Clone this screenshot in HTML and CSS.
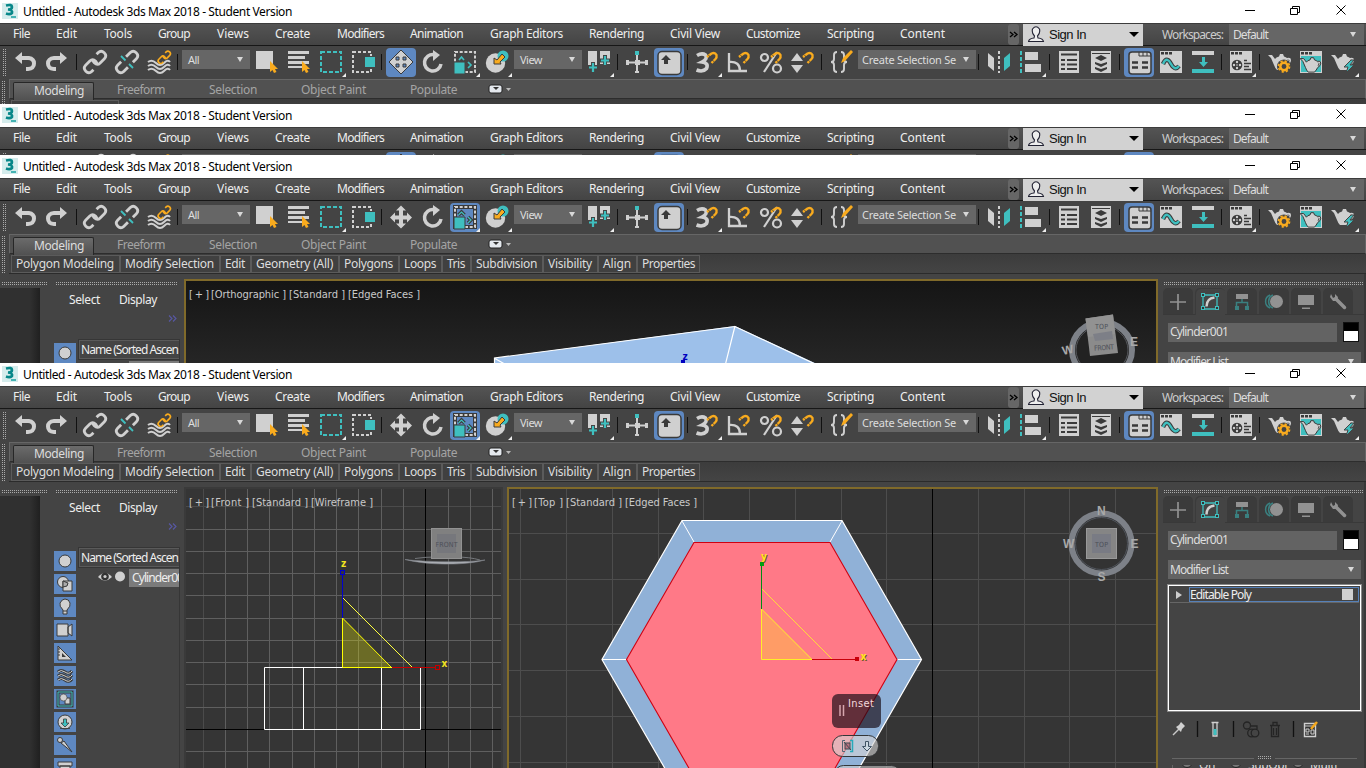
FILE: index.html
```html
<!DOCTYPE html>
<html lang="en">
<head>
<meta charset="utf-8">
<title>Untitled - Autodesk 3ds Max 2018 - Student Version</title>
<link rel="stylesheet" href="styles.css">
</head>
<body>
<section class="window window-a" data-active="move" data-rows="tabs"></section>
<section class="window window-b" data-active="move" data-rows="menu"></section>

<section class="window window-c" data-active="scale">
  <div class="workspace">
    <div class="explorer-slot"></div>
    <div class="views">
      <svg class="view" width="974" height="84" viewBox="184 279 974 84">
        <defs><linearGradient id="dark" x2="0" y2="1"><stop stop-color="#151515"/><stop offset="1" stop-color="#272727"/></linearGradient></defs>
        <rect x="184" y="279" width="974" height="100" fill="#806a2a"/>
        <rect x="186" y="281" width="970" height="90" fill="url(#dark)"/>
        <path d="M494 370V358L735 326L830 370Z" fill="#9dc0ea"/>
        <path d="M494.500 370V358L735 326.500L830 371M494 358L510 367M735 326L724 370" fill="none" stroke="#fff" stroke-width="1.200"/>
        <rect x="681" y="360" width="4" height="4" fill="#0000c0"/>
        <text class="axis" x="682.500" y="360" fill="#0000c0">z</text>
        <text class="vlabel" x="189" y="298"><tspan textLength="20">[+]</tspan><tspan x="211" textLength="75">[Orthographic ]</tspan><tspan x="289" textLength="56">[Standard ]</tspan><tspan x="348" textLength="72">[Edged Faces ]</tspan></text>
        <ellipse cx="1102" cy="350" rx="30" ry="28" fill="none" stroke="#7d8188" stroke-width="6"/>
        <ellipse cx="1102" cy="350" rx="26" ry="24" fill="#222" stroke="#55575c" stroke-width="1"/>
        <path d="M1085.500 318.500L1113 314.500L1118 353L1090 356Z" fill="#8b8b8b"/>
        <path d="M1085.500 318.500L1113 314.500L1115 334L1088 337Z" fill="#929292"/>
        <path d="M1093 334L1112 331L1113 339L1095 341Z" fill="#7d7f87"/>
        <text class="cube" x="1095" y="329" textLength="13">TOP</text>
        <text class="cube" x="1094" y="350" textLength="20" transform="rotate(-4 1104 347)">FRONT</text>
        <text class="compass" x="1062" y="354" transform="rotate(-12 1067 350)">W</text>
        <text class="compass" x="1130" y="346">E</text>
      </svg>
    </div>
    <div class="command-slot"></div>
  </div>
</section>

<section class="window window-d" data-active="scale">
  <div class="workspace">
    <div class="explorer-slot"></div>
    <div class="views">
      <svg class="view" width="323" height="281" viewBox="184 487 323 281">
        <rect x="184" y="487" width="323" height="281" fill="#444"/>
        <rect x="184" y="487" width="319" height="281" fill="#3a3a3a"/>
        <rect x="186" y="489" width="315" height="279" fill="#353535"/>
        <path d="M203.500 489V768M186 506.500H501" stroke="#4b4b4b"/>
        <path d="M225.500 489V768M247.500 489V768M269.500 489V768M292.500 489V768M314.500 489V768M336.500 489V768M358.500 489V768M381.500 489V768M403.500 489V768M448.500 489V768M470.500 489V768M492.500 489V768M186 529.500H501M186 551.500H501M186 573.500H501M186 595.500H501M186 618.500H501M186 640.500H501M186 662.500H501M186 684.500H501M186 707.500H501M186 751.500H501" stroke="#5f5f5f"/>
        <path d="M425.500 489V768M186 729.500H501" stroke="#000"/>
        <path d="M264.500 667.500H420.500V729.500H264.500ZM303.500 667V729M381.500 667V729" fill="none" stroke="#fff"/>
        <path d="M342.500 618L391.500 667.500H342.500Z" fill="#ffff00" fill-opacity=".27" stroke="#ffff00"/>
        <path d="M343 598L412 667" stroke="#ffff40"/>
        <path d="M342.500 574V618" stroke="#0000d0"/><rect x="340.500" y="570.500" width="4" height="4" fill="#334" stroke="#0000d0"/>
        <path d="M392 667.500H436" stroke="#c80000"/><rect x="435.500" y="665.500" width="4" height="4" fill="#333" stroke="#c80000"/>
        <text class="axis" x="341" y="567" fill="#f2e520">z</text>
        <text class="axis" x="441.500" y="667" fill="#f2e520">x</text>
        <path d="M405 559.500C425 565 465 566 485 560C465 563 425 562 405 559.500Z" fill="#adb0b5" stroke="#81858b" stroke-width=".6"/>
        <path d="M415 558.500Q425 557 435 557M455 557Q470 557 480 560" fill="none" stroke="#74777b"/>
        <rect x="431.500" y="528.500" width="30" height="30" fill="#808080" stroke="#929292"/>
        <rect x="437" y="534" width="19" height="19" fill="#76777c"/>
        <text class="cube" x="435.500" y="546.500" textLength="22">FRONT</text>
        <text class="vlabel" x="189" y="506"><tspan textLength="20">[+]</tspan><tspan x="211" textLength="38">[Front ]</tspan><tspan x="252" textLength="56">[Standard ]</tspan><tspan x="311" textLength="62">[Wireframe ]</tspan></text>
      </svg>
      <svg class="view" width="651" height="281" viewBox="507 487 651 281">
        <rect x="507" y="487" width="651" height="290" fill="#806a2a"/>
        <rect x="509" y="489" width="647" height="290" fill="#353535"/>
        <path d="M520.500 489V768M566.500 489V768M612.500 489V768M658.500 489V768M703.500 489V768M749.500 489V768M795.500 489V768M841.500 489V768M886.500 489V768M978.500 489V768M1024.500 489V768M1069.500 489V768M1115.500 489V768M509 533.500H1156M509 579.500H1156M509 624.500H1156M509 670.500H1156M509 716.500H1156M509 762.500H1156" stroke="#4d4d4d"/>
        <path d="M932.500 489V768" stroke="#000"/>
        <path d="M682 520.500H842L921.500 659.500L842 798H682L602 659.500Z" fill="#90b1d7" stroke="#fff" stroke-width="1.200"/>
        <path d="M682 521L694 542M842 521L830 542M602 659.500H627M897 659.500H922" stroke="#fff"/>
        <path d="M694 542.500H830L897 659.500L830 777H694L626.500 659.500Z" fill="#ff7987" stroke="#d00010" stroke-width="1.100"/>
        <path d="M761.500 609L812 659.500H761.500Z" fill="#ff9c66" stroke="#ffef28"/>
        <path d="M762 589L832 659" stroke="#ffe630" stroke-width=".9"/>
        <path d="M761.500 564V609" stroke="#008c14"/><rect x="760" y="562" width="4" height="4" fill="#00a010"/>
        <path d="M812 659.500H857" stroke="#c8000a"/><rect x="855" y="657" width="4" height="4" fill="#c8000a"/>
        <text class="axis shadow" x="761" y="560" fill="#ffe820">y</text>
        <text class="axis shadow" x="860.500" y="660" fill="#ffe820">x</text>
        <rect x="832" y="694" width="49" height="34" rx="6" fill="#180c16" fill-opacity=".68"/>
        <path d="M840 705V716M843.500 705V716" stroke="#d6a5ad" stroke-width="1.500"/>
        <text class="inset" x="848" y="707" textLength="26">Inset</text>
        <rect x="832.500" y="735.500" width="46" height="21" rx="10" fill="#d5d5d5" fill-opacity=".62" stroke="#343638"/>
        <path d="M845 740.500H842.500V751.500H845" fill="none" stroke="#526472"/><path d="M850 740.500H852.500V751.500H850" fill="none" stroke="#27a9ba" stroke-width="1.500"/>
        <rect x="845" y="743" width="5" height="6" fill="#b9727f" stroke="#3c4850"/><path d="M844 742L851 750" stroke="#3c4850"/>
        <path d="M865.500 741.500H868.500V746.500H871.500L867 751L862.500 746.500H865.500Z" fill="#ccd9e3" stroke="#405466"/>
        <rect x="834.500" y="765.500" width="66" height="20" rx="9" fill="#c9c9c9" fill-opacity=".6" stroke="#343638"/>
        <circle cx="1101.500" cy="543.500" r="30" fill="#333" stroke="#7d8188" stroke-width="6"/>
        <circle cx="1101.500" cy="543.500" r="26" fill="none" stroke="#50555d"/>
        <rect x="1086.500" y="528.500" width="30" height="30" fill="#858585" stroke="#999"/>
        <rect x="1092" y="534" width="19" height="19" fill="#797b84"/>
        <text class="cube" x="1095" y="546.500" textLength="13">TOP</text>
        <text class="compass" x="1097" y="515">N</text><text class="compass" x="1097.500" y="581">S</text>
        <text class="compass" x="1063" y="548">W</text><text class="compass" x="1130.500" y="548">E</text>
        <text class="vlabel" x="512" y="506"><tspan textLength="20">[+]</tspan><tspan x="534" textLength="29">[Top ]</tspan><tspan x="566" textLength="56">[Standard ]</tspan><tspan x="625" textLength="72">[Edged Faces ]</tspan></text>
      </svg>
    </div>
    <div class="command-slot"></div>
  </div>
</section>

<template id="explorer">
  <aside class="explorer">
    <div class="dock-strip"><i class="dots"></i><div class="dock-dark"></div></div>
    <div class="scene">
      <i class="dots"></i>
      <div class="scene-menu"><span data-w="31">Select</span><span data-w="38">Display</span></div>
      <div class="chevrons"><svg width="9" height="7"><path d="M1 .5L4 3.500L1 6.500M5 .5L8 3.500L5 6.500" fill="none" stroke="#5858a4" stroke-width="1.100"/></svg></div>
      <div class="scene-main">
        <div class="filters"></div>
        <div class="tree">
          <div class="tree-head"><span data-w="97">Name (Sorted Ascen</span></div>
          <div class="tree-row">
            <svg width="31" height="18"><path d="M0 8Q7 0 14 8Q7 15 0 8Z" fill="#cfcfcf"/><circle cx="7" cy="7.500" r="3.800" fill="#333"/><circle cx="7" cy="7.500" r="1.600" fill="#ccc"/><circle cx="22" cy="7.500" r="5" fill="#d0d0d0"/></svg>
            <div class="tree-name"><span data-w="57">Cylinder001</span></div>
          </div>
        </div>
      </div>
    </div>
  </aside>
</template>

<template id="command">
  <aside class="command">
    <i class="dots"></i>
    <div class="cmd-tabs">
      <svg viewBox="0 0 30 26"><path d="M15 6V22M7 14H23" stroke="#929292" stroke-width="1.700"/></svg>
      <svg class="on" viewBox="0 0 30 26"><g transform="translate(.5)"><path d="M8 6.500H21M8 20.500H21M7.500 8V20M21.500 8V20" stroke="#3fbfbf" stroke-width="1.300"/><g fill="#333" stroke="#3fbfbf"><rect x="6" y="5" width="3" height="3"/><rect x="20" y="5" width="3" height="3"/><rect x="6" y="18" width="3" height="3"/><rect x="20" y="18" width="3" height="3"/></g><path d="M11 18Q11 10 19 9" fill="none" stroke="#d0d0d0" stroke-width="2.500"/></g></svg>
      <svg viewBox="0 0 30 26"><rect x="9" y="6" width="12" height="5" fill="#929292"/><path d="M15 11V15M9.500 19V14.500H20.500V19" fill="none" stroke="#3a8080" stroke-width="1.500"/><path d="M8 18H12V22H8ZM18 18H22V22H18Z" fill="#3a8080"/></svg>
      <svg viewBox="0 0 30 26"><path d="M11 7A7 7 0 0 0 11 20M14 7A7 7 0 0 0 14 20" fill="none" stroke="#3a8080" stroke-width="1.500"/><circle cx="17.500" cy="13.500" r="6.500" fill="#929292"/></svg>
      <svg viewBox="0 0 30 26"><path d="M7 7H23V17H7ZM11 19.500H19V21H11Z" fill="#929292"/></svg>
      <svg viewBox="0 0 30 26"><path d="M13 11L21.500 19.500" stroke="#929292" stroke-width="3.500" stroke-linecap="round"/><path d="M8 6L7 9L10 13H14L15 9L12 6L12 9L10 10Z" fill="#929292"/></svg>
    </div>
    <div class="name-row"><div class="field name-field"><span data-w="58">Cylinder001</span></div><i class="swatch"></i></div>
    <div class="field mod-list"><span data-w="58">Modifier List</span><i class="tri"></i></div>
    <div class="stack"><div class="stack-row"><i class="expand"></i><div class="stack-item"><span data-w="61">Editable Poly</span><i class="toggle"></i></div></div></div>
    <svg class="stack-tools" width="195" height="24" viewBox="1167 717 195 24">
      <path d="M1173 735L1179 729" stroke="#c8c8c8" stroke-width="1.500"/><path d="M1176 727L1181 732L1182 729L1185 726L1181 722L1179 725Z" fill="#d0d0d0"/>
      <path d="M1197.500 721V737M1233.500 721V737M1293.500 721V737" stroke="#111" stroke-width="1.300"/>
      <path d="M1211.500 722.500H1218.500M1213 723V736H1217V723" fill="none" stroke="#d0d0d0" stroke-width="1.300"/><rect x="1213.500" y="729" width="3" height="6" fill="#3fbfbf"/>
      <g fill="#444" stroke="#242424" stroke-width="1.300"><circle cx="1247" cy="725.500" r="3.500"/><circle cx="1251.500" cy="733" r="3.800"/><circle cx="1255" cy="733" r="3.800"/><path d="M1251 726H1257V729" fill="none"/></g>
      <path d="M1270 725.500H1280M1273 725V722.500H1277V725M1271.500 726V736.500H1278.500V726M1273.500 728V735M1276.500 728V735" fill="none" stroke="#242424" stroke-width="1.300"/>
      <path d="M1304.500 723.500H1315.500V736.500H1304.500Z" fill="#333" stroke="#d0d0d0" stroke-width="1.400"/><path d="M1305 726H1315M1306 729H1309V732H1306ZM1311 730H1314V734H1311ZM1306 734H1309" fill="none" stroke="#d0d0d0"/><path d="M1311 729L1317 722" stroke="#f5a81c" stroke-width="2.500"/>
    </svg>
    <div class="divider"><i></i><b class="dots"></b><i></i></div>
    <div class="options"><div><i></i><span>On</span></div><div><i></i><span>SubObj</span></div><div><i></i><span>Multi</span></div></div>
  </aside>
</template>
<script src="script.js"></script>
</body>
</html>
```

FILE: styles.css
```css
* { box-sizing: border-box; }
body { margin: 0; width: 1366px; height: 768px; overflow: hidden; background: #444; font-family: "Noto Sans", "Open Sans", sans-serif; font-size: 12px; }
i, b { display: block; font-style: normal; }
svg { display: block; flex: none; }
span { white-space: nowrap; }
.window { overflow: hidden; background: #444; width: 1366px; }
.window-a { height: 104px; }
.window-b { height: 51px; }
.window-c { height: 208px; }
.window-d { height: 405px; }

.titlebar { height: 23px; background: #fff; color: #000; display: flex; align-items: center; padding-left: 2px; }
.titlebar span { margin-left: 5px; line-height: 22px; }
.titlebar .logo { margin-top: -1px; }
.titlebar .controls { margin: -1px 0 0 auto; }

.menubar { height: 23px; display: flex; background: linear-gradient(#545454, #444); border-top: 1px solid #3c3c3c; border-bottom: 1px solid #171717; color: #eee; line-height: 20px; }
.menu { display: flex; padding-left: 13px; width: 1008px; }
.menu div { flex: none; }
.more { width: 11px; height: 21px; border-radius: 3px; background: #666; padding: 7px 0 0 1px; }
.sign { width: 120px; height: 22px; margin-left: 4px; background: #d2d2d2; color: #111; display: flex; align-items: center; padding: 0 4px 2px 5px; font: 13px "Liberation Sans", sans-serif; }
.sign span { margin-left: 4px; }
.sign .drop { margin: 0 0 0 auto; border: 5px solid transparent; border-top-color: #000; border-bottom: 0; }
.work { margin-left: 19px; width: 67px; color: #ccc; line-height: 22px; }
.work-select { width: 135px; height: 21px; background: #666; color: #ddd; padding: 0 8px 0 4px; display: flex; align-items: center; justify-content: space-between; }
.tri { border: 3px solid transparent; border-top: 5px solid #d8d8d8; border-bottom: 0; }

.toolbar { height: 33px; display: flex; background: #444; }
.grip { width: 10px; padding: 3px 0 0 3px; }
.grip::before { content: ""; display: block; width: 3px; height: 27px; background: radial-gradient(circle at .5px .5px, #aaa 0 .7px, transparent .8px) 0 0 / 2px 2px; }
.tool { width: 32px; height: 32px; flex: none; display: grid; place-items: center; }
.tool svg { grid-area: 1 / 1; overflow: visible; }
.tool.active::before { content: ""; grid-area: 1 / 1; width: 30px; height: 29px; border-radius: 4px; background: #5e88c1; }
.sep { flex: none; padding: 8px 0 0 2px; }
.sep::before { content: ""; display: block; width: 1px; height: 16px; background: #111; }
.combo { flex: none; margin-top: 4px; height: 19px; background: #666; color: #ddd; display: flex; align-items: center; justify-content: space-between; padding: 0 7px 1px 6px; font-size: 11px; }
.combo.wide { padding-left: 4px; }

.ribbon { display: flex; height: 40px; }
.ribbon .grip { width: 9px; padding: 2px 0 0 2px; }
.ribbon .grip::before { height: 37px; }
.ribbon-main { flex: 1; }
.tabs { height: 20px; display: flex; background: #515151; border-top: 1px solid #666; border-left: 1px solid #666; border-right: 1px solid #666; border-bottom: 1px solid #2d2d2d; color: #a4a4a4; line-height: 20px; }
.tabs > div { flex: none; }
.tabs .current { margin: 2px 0 0 3px; padding-left: 20px; background: linear-gradient(#6b6b6b, #515151); border: 1px solid #272727; border-bottom: 0; border-radius: 2px 2px 0 0; width: 81px; color: #ddd; line-height: 15px; height: 18px; }
.tabs svg { margin: 4px 0 0 0; }
.panels { height: 20px; background: linear-gradient(#3c3c3c, #444); border-bottom: 1px solid #2b2b2b; display: flex; padding-left: 2px; }
.panels > div { height: 18px; margin-top: 1px; border: 1px solid #5b5b5b; background: #404040; color: #ddd; line-height: 15px; padding-left: 4px; flex: none; }

.workspace { display: flex; }
.explorer { width: 184px; height: 286px; display: flex; overflow: hidden; }
.dots { height: 4px; background: radial-gradient(circle at .5px .5px, #aaa 0 .7px, transparent .8px) 0 0 / 2px 2px; }
.dock-strip { width: 40px; padding-top: 8px; }
.dock-strip .dots { width: 45px; margin-left: 2px; height: 3px; }
.dock-dark { height: 275px; margin-top: 3px; background: linear-gradient(90deg, #303030 75%, #202020); }
.scene { width: 144px; padding: 8px 4px 0 14px; }
.scene > .dots { width: 122px; margin-left: 2px; height: 3px; }
.scene-menu { display: flex; gap: 19px; color: #eee; padding: 7px 0 0 15px; height: 27px; line-height: 16px; }
.chevrons { display: flex; justify-content: flex-end; padding: 3px 3px 0 0; height: 27px; }
.scene-main { display: flex; gap: 2px; }
.filters { display: grid; gap: 3px; padding-top: 4px; width: 22px; flex: none; }
.filters svg { width: 22px; height: 20px; background: #5e88c1; }
.tree { width: 102px; overflow: hidden; border-right: 1px solid #363636; }
.tree-head { height: 21px; border: 1px solid #363636; border-right: 0; box-shadow: inset 0 1px #5a5a5a, inset 0 -1px #5a5a5a, inset 1px 0 #5a5a5a; padding-left: 2px; color: #eee; line-height: 19px; overflow: hidden; white-space: nowrap; }
.tree-row { display: flex; height: 20px; padding: 1px 0 0 20px; }
.tree-name { flex: none; width: 60px; height: 18px; background: #7b7b7b; color: #eee; padding-left: 3px; line-height: 17px; }

.views { width: 974px; display: flex; padding-top: 5px; flex: none; }
.view { overflow: hidden; }
.vlabel { font: 11px "DejaVu Sans Condensed", "DejaVu Sans", sans-serif; fill: #c9c9c9; white-space: pre; }
.axis { font: bold 10px "DejaVu Sans Condensed", "DejaVu Sans", sans-serif; }
.shadow { text-shadow: 1px 1px #6a5a20; }
.cube { font: 7px "DejaVu Sans Condensed", "DejaVu Sans", sans-serif; fill: #4d5058; }
.compass { font: bold 12px "Liberation Sans", sans-serif; fill: #a9a9a9; }
.inset { font: 11px "DejaVu Sans Condensed", "DejaVu Sans", sans-serif; fill: #f3d8dc; }

.command { width: 208px; height: 286px; padding: 8px 0 0 5px; overflow: hidden; border-right: 2px solid #383838; }
.command > .dots { width: 199px; margin-left: 1px; height: 3px; }
.cmd-tabs { display: flex; gap: 2px; height: 30px; padding-top: 3px; border-bottom: 1px solid #393939; }
.cmd-tabs svg { width: 30px; height: 26px; border-radius: 5px 5px 0 0; background: #3b3b3b; }
.cmd-tabs .on { height: 27px; background: #444; box-shadow: inset 1px 1px #3b3b3b; }
.field { background: #636363; color: #ddd; height: 19px; line-height: 18px; padding-left: 2px; }
.name-row { display: flex; gap: 6px; padding: 8px 0 0 5px; height: 37px; }
.name-field { width: 169px; }
.swatch { width: 16px; height: 20px; margin-top: -1px; border: 1px solid #111; background: linear-gradient(#000 45%, #fff 45%); }
.mod-list { margin-left: 5px; width: 193px; display: flex; justify-content: space-between; align-items: center; padding-right: 7px; }
.stack { width: 195px; height: 128px; margin: 5px 0 0 4px; border: 1px solid #888; outline: 1px solid #fff; outline-offset: -2px; padding: 2px; }
.stack-row { height: 16px; border-bottom: 1px solid #666; display: flex; }
.expand { border: 4px solid transparent; border-left: 6px solid #ccc; border-right: 0; width: 6px; height: 8px; margin: 4px 7px 0 6px; }
.stack-item { flex: 1; height: 15px; border: 1px solid #5580b8; color: #eee; display: flex; justify-content: space-between; align-items: center; padding: 0 5px 0 0; line-height: 13px; }
.toggle { width: 11px; height: 11px; background: #d0d0d0; }
.stack-tools { margin: 5px 0 0 4px; }
.divider { display: flex; gap: 4px; height: 24px; align-items: center; padding: 10px 0 0 9px; }
.divider i { width: 82px; height: 1px; background: #666; }
.divider .dots { width: 13px; }
.options { display: flex; margin: 0 0 0 9px; height: 6px; overflow: hidden; border-left: 1px solid #666; color: #ddd; font-size: 12px; }
.options div { display: flex; width: 62px; padding-left: 8px; }
.options div:first-child { width: 49px; }
.options i { width: 12px; height: 12px; border-radius: 50%; margin: -9px 6px 0 0; background: #777; border: 1px solid #222; flex: none; }
.options span { line-height: 12px; margin-top: -6px; height: 12px; letter-spacing: -.4px; }
```

FILE: script.js
```js
const G = '#d0d0d0', T = '#3fbfbf', Y = '#f9ab1e', D = '#3a3a3a';
const fly = `<path d="M31 27V31H27Z" fill="#eee"/>`;
const magnet = `<path d="M16 11L20.500 7.500Q24 6 25.500 9Q26 11.500 24.500 13L20.500 17" fill="none" stroke="${Y}" stroke-width="2.400"/><path d="M17.500 9L19 11M21 14L23.500 16" stroke="#444" stroke-width=".8"/>`;
const chain = `<g transform="rotate(-45 16 16)" fill="none" stroke-width="2.800"><path d="M9.500 20.300H7Q3 20.300 3 16Q3 11.700 7 11.700H13Q17 11.700 17 16Q17 18 15.500 19.500"/><path d="M22.500 11.700H25Q29 11.700 29 16Q29 20.300 25 20.300H19Q15 20.300 15 16Q15 14 16.500 12.500"/></g>`;
const broken = `<g transform="rotate(-45 16 16)" fill="none" stroke-width="2.800"><path d="M13 20.300H7Q3 20.300 3 16Q3 11.700 7 11.700H12"/><path d="M19 11.700H25Q29 11.700 29 16Q29 20.300 25 20.300H20"/></g>`;
const cursor = `<path d="M19 15V26L21.500 24L23 27L25.500 26L24 23H27Z" fill="${Y}"/>`;
const pot = `<path d="M4 9H8L11 13Q12 11 15 10.500L16 8H19L20 10.500Q22 11 23 12Q27 11 27 14Q27 17 23.500 19Q22 22 20 24H13Q11 22 10 19L7 12Z" fill="${G}"/><path d="M24 13.500Q26 14 24 17" fill="none" stroke="#444"/>`;
const win = `<path d="M5 5H27V27H5Z" fill="${G}"/><path d="M6 6H9V8.500H6ZM10 6H13V8.500H10ZM14 6H17V8.500H14Z" fill="${D}"/>`;
const scaleArt = edge => `<rect x="6" y="6" width="20" height="20" fill="none" stroke="${G}" stroke-width="2" stroke-dasharray="3 1.700"/><path d="M5 16H16V28H5Z" fill="${T}" stroke="${edge}"/>`;
const icons = {
  undo: `<path d="M5 12L12 6V10H19Q26 11 26 17.500Q26 24 18 25H16V21H18Q22 21 22 17.500Q22 14 18 14H12V18Z" fill="${G}"/>`,
  redo: `<path d="M25 12L18 6V10H12Q4 11 4 17.500Q4 24 12 25H14V21H12Q8 21 8 17.500Q8 14 12 14H18V18Z" fill="${G}"/>`,
  link: `<g stroke="${G}">${chain}</g>`,
  unlink: `<g stroke="${G}">${broken}</g><path d="M10 10L14.500 14.500M18 18L22 22" stroke="${T}" stroke-width="1.800"/>`,
  bind: `<path d="M5 16Q9 13 13 17T21 17T27 16M5 20Q9 17 13 21T21 21T27 20M5 24Q9 21 13 25T21 25T27 24" fill="none" stroke="${G}" stroke-width="2"/><g stroke="${Y}" transform="translate(12 2) scale(.58)">${chain}</g>`,
  select: `<path d="M5 5H22V23H5Z" fill="${G}"/>${cursor}`,
  byname: `<path d="M5 5H26V8H5ZM5 10H22V13H5ZM5 15H26V18H5ZM5 20H19V22H5Z" fill="${G}"/>${cursor}`,
  region: `<rect x="6" y="6" width="20" height="20" fill="none" stroke="${T}" stroke-width="2" stroke-dasharray="4 2"/>${fly}`,
  crossing: `<rect x="6" y="6" width="18" height="20" fill="none" stroke="${G}" stroke-width="2" stroke-dasharray="3 2"/><rect x="17" y="10" width="11" height="13" fill="#444"/><rect x="18" y="11" width="10" height="10" fill="${T}"/>`,
  move: `<path d="M16 5L21 10H18V15H22V12L27 17L22 22V19H18V23H21L16 28L11 23H14V19H10V22L5 17L10 12V15H14V10H11Z" transform="translate(0 -.5)" fill="${G}"/>`,
  rotate: `<path d="M17 8.500A8.300 8.300 0 1 0 24 18" fill="none" stroke="${G}" stroke-width="3.500"/><path d="M16 4L23 9L16 15Z" fill="${G}"/>`,
  scale: `${scaleArt('#444')}<path d="M10 14L12.500 11L15 14M19 16L22 19L19 22" fill="none" stroke="${T}" stroke-width="1.700"/>${fly}`,
  place: `<circle cx="14.500" cy="17" r="9.700" fill="${G}"/><circle cx="22" cy="10" r="5.500" fill="${T}"/><path d="M21 8L24 11L19 16L20 18H13V12L16 14Z" fill="${Y}" stroke="${D}"/>${fly}`,
  pivot: `<path d="M5 5H14V22H5ZM17 5H27V18H17Z" fill="${G}"/><path d="M10 16V26M5 21H15M22 9V20M17 14.500H27" stroke="#444" stroke-width="4"/><path d="M10 17V26M6 21.500H14M22 10V19M18 14.500H26" stroke="${T}" stroke-width="2.200"/>${fly}`,
  manip: `<path d="M16 8V27M5 16.500H27" stroke="${G}" stroke-width="2"/><path d="M14 14H19V19H14ZM5 14H8V19H5ZM24 14H27V19H24ZM14 25H18V27H14Z" fill="${G}"/><path d="M14 5H18V9H14Z" fill="${T}"/>`,
  keys: `<rect x="5" y="5.500" width="23" height="23" rx="4" fill="${G}" stroke="${D}" stroke-width="1.500"/><path d="M13 9L18 14H15V18H11V14H8Z" fill="${D}"/>`,
  snap: `<path d="M6 9.500Q11 6.500 14.500 9Q17 13 11 16Q18 17 15.500 22.500Q12 26.500 5.500 24" fill="none" stroke="${G}" stroke-width="3.600"/>${magnet}${fly}`,
  angle: `<path d="M6 7V25H24M6 16Q17 15 17 25" fill="none" stroke="${G}" stroke-width="2.300"/>${magnet}`,
  percent: `<path d="M9 26L22 6" stroke="${G}" stroke-width="2.200"/><circle cx="9.500" cy="11.500" r="3.500" fill="none" stroke="${G}" stroke-width="2.200"/><circle cx="22" cy="22.500" r="4" fill="none" stroke="${G}" stroke-width="2.200"/>${magnet}`,
  spinner: `<path d="M10 7L16 15H4ZM10 27L16 19H4Z" fill="${G}"/>${magnet}`,
  braces: `<path d="M11 6Q8 6 8 9V13Q8 16 5 16Q8 16 8 19V23Q8 26 11 26M15 6Q18 6 18 9V13Q18 16 21 16Q18 16 18 19V23Q18 26 15 26" fill="none" stroke="${G}" stroke-width="1.900"/><path d="M15 17L17 12L25 4L27 6L19 15Z" fill="${Y}"/>`,
  mirror: `<path d="M5 7L11 12V25L5 20Z" fill="${G}"/><path d="M27 7L21 12V25L27 20Z" fill="${T}"/><path d="M16 5V27" stroke="${G}" stroke-width="2" stroke-dasharray="3 2"/>`,
  align: `<path d="M6 5V27" stroke="${T}" stroke-width="2" stroke-dasharray="4 2"/><path d="M10 6H23V14H10ZM10 18H26V26H10Z" fill="${G}"/>${fly}`,
  layers: `<path d="M6 5H26V27H6Z" fill="${G}"/><path d="M8 8.500H24M8 14H12M14 14H24M8 18.500H12M14 18.500H24M8 23H12M14 23H24" stroke="${D}" stroke-width="2"/>`,
  stackedLayers: `<path d="M6 5H26V27H6Z" fill="${G}"/><path d="M7 7.500H25" stroke="${D}"/><path d="M16 9L22 12L16 15L10 12ZM10 16L16 18L22 16V18L16 21L10 18ZM10 21L16 23L22 21V23L16 26L10 23Z" fill="${D}"/>`,
  ribbonTool: `<rect x="6" y="6" width="22" height="22" rx="3" fill="${G}" stroke="${D}" stroke-width="1.500"/><path d="M16 6V10H28M20 6V10M24 6V10" fill="none" stroke="${D}"/><path d="M9 16.500H15M19 16.500H25M9 21.500H15M19 21.500H25" stroke="${D}" stroke-width="2.500"/>`,
  curve: `${win}<path d="M8 18C11 11 14 14 16 18S21 24 24 20" fill="none" stroke="${D}" stroke-width="4.500"/><path d="M8 18C11 11 14 14 16 18S21 24 24 20" fill="none" stroke="${T}" stroke-width="2.400"/>`,
  schematic: `<path d="M5 5H27V9H5Z" fill="${G}"/><path d="M5 23H27V27H5Z" fill="${T}"/><path d="M15 11H18V16H21L16.500 21L12 16H15Z" fill="${T}"/>`,
  material: `${win}<circle cx="12" cy="19" r="5.300" fill="${D}"/><g fill="${G}"><circle cx="12" cy="16" r="1.200"/><circle cx="12" cy="22" r="1.200"/><circle cx="9" cy="19" r="1.200"/><circle cx="15" cy="19" r="1.200"/><circle cx="12" cy="19" r=".8"/></g><path d="M19 14.500H22M19 17.500H26M19 20.500H24M19 23.500H26" stroke="${D}" stroke-width="1.600"/>${fly}`,
  setup: `${pot}<circle cx="20" cy="20.500" r="7" fill="#444"/><circle cx="20" cy="20.500" r="3.700" fill="none" stroke="${Y}" stroke-width="2.500"/><circle cx="20" cy="20.500" r="5.500" fill="none" stroke="${Y}" stroke-width="1.700" stroke-dasharray="2.200 2.120"/>`,
  frame: `<g transform="translate(-1)">${win}<path d="M6 10H26V26H6Z" fill="${T}"/><g transform="translate(1.500 4.500) scale(.9)" stroke="${D}" stroke-width="1.100">${pot}</g></g>`,
  render: `<g transform="translate(-1)">${pot}</g><path d="M23 14L16 21H20L18 27L26 19H22L26 14Z" fill="${T}" stroke="#444"/>${fly}`
};
const activeArt = {
  move: `<path d="M16 4L28 16L16 28L4 16Z" fill="${G}" stroke="${D}"/><path d="M11 11H14V14H11ZM18 11H21V14H18ZM11 18H14V21H11ZM18 18H21V21H18Z" fill="#5e88c1" stroke="${D}"/>`,
  scale: `<rect x="6" y="6" width="20" height="20" fill="none" stroke="${D}" stroke-width="4"/>${scaleArt(D)}<g fill="none"><path d="M9.500 14L12.500 11L15.500 14M19 16L22 19L19 22" stroke="${D}" stroke-width="3.500"/><path d="M9.500 14L12.500 11L15.500 14M19 16L22 19L19 22" stroke="${T}" stroke-width="1.200"/></g>${fly}`
};
// Numbers are separator widths; arrays are [label, box width, text width].
const tools = ['undo', 'redo', 5, 'link', 'unlink', 'bind', 7, ['All', 68, 11], 'select', 'byname', 'region', 'crossing', 6, 'move', 'rotate', 'scale', 'place', ['View', 68, 22], 'pivot', 6, 'manip', 'keys', 6, 'snap', 'angle', 'percent', 'spinner', 7, 'braces', ['Create Selection Se', 118, 94], 7, 'mirror', 'align', 6, 'layers', 'stackedLayers', 6, 'ribbonTool', 'curve', 'schematic', 6, 'material', 7, 'setup', 'frame', 'render'];
const menus = [['File', 43, 17], ['Edit', 48, 21], ['Tools', 54, 28], ['Group', 59, 32], ['Views', 58, 32], ['Create', 62, 35], ['Modifiers', 73, 47], ['Animation', 80, 53], ['Graph Editors', 99, 73], ['Rendering', 81, 55], ['Civil View', 76, 50], ['Customize', 81, 54], ['Scripting', 73, 47], ['Content', 60, 45]];
const panels = [['Polygon Modeling', 109, 98], ['Modify Selection', 100, 89], ['Edit', 31, 20], ['Geometry (All)', 88, 77], ['Polygons', 60, 49], ['Loops', 43, 32], ['Tris', 29, 18], ['Subdivision', 72, 61], ['Visibility', 55, 44], ['Align', 39, 28], ['Properties', 63, 53]];
const tabs = [['Freeform', 92, 48], ['Selection', 92, 48], ['Object Paint', 109, 65], ['Populate', 78, 47]];
const filters = [
  `<circle cx="11" cy="10" r="6" fill="${G}" stroke="${D}"/>`,
  `<circle cx="9" cy="8" r="5.500" fill="${G}" stroke="${D}"/><path d="M9 7H18V17H9Z" fill="${G}" stroke="${D}"/><path d="M9 7L14 9L13 12L9 13Z" fill="#aaa" stroke="${D}"/>`,
  `<path d="M9 13Q5 9 6 6Q8 2 11 2Q15 2 16 6Q17 9 13 13V17H9Z" fill="${G}" stroke="${D}"/><path d="M9 14H13" stroke="${D}"/>`,
  `<path d="M3 4H14V16H3ZM14 7L18 4V16L14 13Z" fill="${G}" stroke="${D}"/>`,
  `<path d="M4 3V17H18Z" fill="${G}" stroke="${D}"/><path d="M8 10V14H12Z" fill="${D}"/><path d="M4 6H6M4 9H6M4 12H6" stroke="${D}"/>`,
  `<g fill="none" stroke="${D}" stroke-width="3"><path d="M4 6Q7 3 11 6T18 5M4 10Q7 7 11 10T18 9M4 14Q7 11 11 14T18 13"/></g><g fill="none" stroke="${G}"><path d="M4 6Q7 3 11 6T18 5M4 10Q7 7 11 10T18 9M4 14Q7 11 11 14T18 13"/></g>`,
  `<path d="M4 3H18V17H4Z" fill="none" stroke="${D}" stroke-width="3"/><path d="M4 3H18V17H4Z" fill="none" stroke="${T}"/><path d="M11 9H16V15H11Z" fill="${G}" stroke="${D}"/><circle cx="9.500" cy="8.500" r="3.500" fill="${G}" stroke="${D}" stroke-width=".6"/>`,
  `<circle cx="11" cy="10" r="7" fill="${G}" stroke="${D}"/><path d="M9.500 7H12.500V11H15L11 15L7 11H9.500ZM6 16.500H16" fill="${T}" stroke="${D}" stroke-width=".8"/>`,
  `<path d="M7 8L10 6L18 17Z" fill="${G}" stroke="${D}"/><circle cx="6" cy="5" r="2.500" fill="${G}" stroke="${D}"/>`,
  `<path d="M4 4H18V8H4ZM6 8H16V16H6Z" fill="${G}" stroke="${D}"/>`
];
const label = ([text, , w]) => `<span data-w="${w}">${text}</span>`;
const box = m => `<div style="width:${m[1]}px">${label(m)}</div>`;

function chrome(active, rows) {
  const bar = tools.map(t => {
    if (typeof t === 'number') return `<i class="sep" style="width:${t}px"></i>`;
    if (Array.isArray(t)) return `<div class="combo${t[1] > 68 ? ' wide' : ''}" style="width:${t[1]}px;margin-left:${t[0] === 'View' ? 1 : 0}px;margin-right:${t[1] === 68 ? 1 : 0}px">${rows === 'menu' ? '' : label(t) + '<i class="tri"></i>'}</div>`;
    const on = t === active || t === 'keys' || t === 'ribbonTool';
    const art = (t === active && activeArt[t]) || icons[t];
    return `<div class="tool${on ? ' active' : ''}"><svg width="32" height="32">${art}</svg></div>`;
  }).join('');
  const ribbon = rows === 'menu' ? '' : `<div class="ribbon"><i class="grip"></i><div class="ribbon-main"><div class="tabs"><div class="current"><span data-w="50">Modeling</span></div><div style="width:23px"></div>${tabs.map(box).join('')}
    <svg width="28" height="12"><rect x="1" y="1" width="13" height="8" rx="2" fill="#e4e8ed" stroke="#222"/><path d="M5 3H11L8 6Z" fill="#333"/><path d="M18 4H23L20.500 7Z" fill="#bbb"/></svg></div><div class="panels">${rows === 'tabs' ? '<div style="width:108px"></div>' : panels.map(box).join('')}</div></div></div>`;
  return `<header class="titlebar"><svg class="logo" width="16" height="16"><path d="M0 0H16V16H0Z" fill="#d5ecec"/><path d="M4 2.500Q10 1 10 4Q10 6.500 6 6.500Q11 7 10 10Q8 12 4 10.500" fill="none" stroke="#078789" stroke-width="2.600"/><path d="M9 14H14" stroke="#14a0a0" stroke-width="1.500"/></svg><span data-w="269">Untitled - Autodesk 3ds Max 2018 - Student Version</span>
    <svg class="controls" width="122" height="22"><path d="M1 10.500H11" stroke="#000"/><path d="M46.500 8.500H53.500V14.500H46.500ZM48.500 8V6.500H55.500V12.500H54M92.500 5.500L101.500 14.500M101.500 5.500L92.500 14.500" fill="none" stroke="#000"/></svg></header>
    <nav class="menubar"><div class="menu">${menus.map(box).join('')}</div><div class="more"><svg width="9" height="8"><path d="M1 1L4 3.500L1 6M5 1L8 3.500L5 6" fill="none" stroke="#000" stroke-width="1.300"/></svg></div>
    <div class="sign"><svg width="17" height="18"><path d="M.500 16.500Q1 13.500 6 13L6.500 11Q3.500 8 4.500 4Q8 -.500 11.500 4Q12.500 8 9.500 11L10 13Q15 13.500 15.500 16.500Z" fill="#eee" stroke="#223" stroke-width="1.100"/></svg><span data-w="37">Sign In</span><i class="drop"></i></div>
    <div class="work"><span data-w="61">Workspaces:</span></div><div class="work-select"><span data-w="35">Default</span><i class="tri"></i></div></nav>
    <div class="toolbar"><i class="grip"></i>${bar}</div>${ribbon}`;
}
document.querySelectorAll('.window').forEach(w => w.insertAdjacentHTML('afterbegin', chrome(w.dataset.active, w.dataset.rows)));
for (const name of ['explorer', 'command'])
  document.querySelectorAll(`.${name}-slot`).forEach(s => s.replaceWith(document.getElementById(name).content.cloneNode(true)));
document.querySelectorAll('.filters').forEach(f => f.innerHTML = filters.map(p => `<svg viewBox="0 0 22 20">${p}</svg>`).join(''));
// Spread each label over its nominal width.
document.querySelectorAll('[data-w]').forEach(s => {
  const natural = s.getBoundingClientRect().width;
  s.style.letterSpacing = (s.dataset.w - natural) / s.textContent.length + 'px';
});
```
